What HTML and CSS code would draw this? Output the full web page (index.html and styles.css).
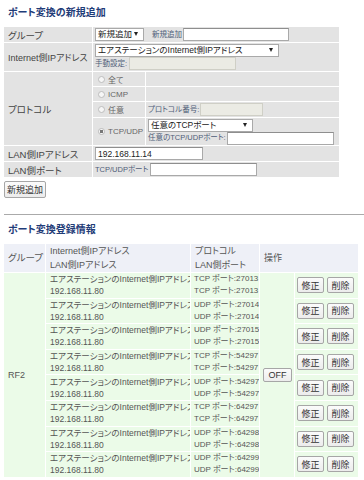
FILE: index.html
```html
<!DOCTYPE html>
<html lang="ja">
<head>
  <meta charset="UTF-8" />
  <meta name="viewport" content="width=device-width, initial-scale=1.0"/>
  <title>ポート変換</title>
  <link rel="stylesheet" href="styles.css">
</head>
<body>

  <h2 class="title">ポート変換の新規追加</h2>

  <!-- New entry form -->
  <table class="form-table">
    <colgroup>
      <col class="c-label">
      <col class="c-radio">
      <col>
    </colgroup>
    <tr class="h15">
      <th>グループ</th>
      <td colspan="2">
        <div class="line">
          <span class="sel w-group">新規追加</span>
          <span class="hint gap">新規追加</span>
          <input class="txt w-group-name" type="text">
        </div>
      </td>
    </tr>
    <tr class="h28">
      <th class="small">Internet側IPアドレス</th>
      <td colspan="2">
        <div class="line">
          <span class="sel w-wan">エアステーションのInternet側IPアドレス</span>
        </div>
        <div class="line">
          <span class="hint">手動設定:</span>
          <input class="txt off w-manual" type="text" disabled>
        </div>
      </td>
    </tr>
    <tr class="h14">
      <th rowspan="4">プロトコル</th>
      <td class="radio"><label><input type="radio" name="proto" disabled>全て</label></td>
      <td></td>
    </tr>
    <tr class="h14">
      <td class="radio"><label><input type="radio" name="proto" disabled>ICMP</label></td>
      <td></td>
    </tr>
    <tr class="h15">
      <td class="radio"><label><input type="radio" name="proto" disabled>任意</label></td>
      <td>
        <div class="line">
          <span class="hint">プロトコル番号:</span>
          <input class="txt off w-protonum" type="text" disabled>
        </div>
      </td>
    </tr>
    <tr class="h27">
      <td class="radio"><label><input type="radio" name="proto" checked>TCP/UDP</label></td>
      <td>
        <div class="line">
          <span class="sel w-port">任意のTCPポート</span>
        </div>
        <div class="line">
          <span class="hint">任意のTCP/UDPポート:</span>
          <input class="txt w-anyport" type="text">
        </div>
      </td>
    </tr>
    <tr class="h15">
      <th>LAN側IPアドレス</th>
      <td colspan="2">
        <div class="line">
          <input class="txt w-lanip" type="text" value="192.168.11.14">
        </div>
      </td>
    </tr>
    <tr class="h15">
      <th>LAN側ポート</th>
      <td colspan="2">
        <div class="line">
          <span class="hint">TCP/UDPポート</span>
          <input class="txt w-lanport" type="text">
        </div>
      </td>
    </tr>
  </table>

  <button class="btn btn-add">新規追加</button>

  <hr class="divider">

  <h2 class="title">ポート変換登録情報</h2>

  <!-- Registered entries -->
  <table class="list-table">
    <colgroup>
      <col class="c-group">
      <col class="c-wan">
      <col class="c-proto">
      <col class="c-off">
      <col class="c-ops">
    </colgroup>
    <thead>
      <tr>
        <th>グループ</th>
        <th>Internet側IPアドレス<br>LAN側IPアドレス</th>
        <th>プロトコル<br>LAN側ポート</th>
        <th colspan="2">操作</th>
      </tr>
    </thead>
    <tbody id="entries"></tbody>
  </table>

  <script>
    const entries = [
      { proto: "TCP", port: 27013 },
      { proto: "UDP", port: 27014 },
      { proto: "UDP", port: 27015 },
      { proto: "TCP", port: 54297 },
      { proto: "UDP", port: 54297 },
      { proto: "TCP", port: 64297 },
      { proto: "UDP", port: 64298 },
      { proto: "UDP", port: 64299 },
    ];

    document.getElementById("entries").innerHTML = entries.map((e, i) => `
      <tr>
        ${i === 0 ? `<td class="group" rowspan="${entries.length}">RF2</td>` : ""}
        <td class="wan">エアステーションのInternet側IPアドレス<br>192.168.11.80</td>
        <td class="proto">${e.proto} ポート:${e.port}<br>${e.proto} ポート:${e.port}</td>
        ${i === 0 ? `<td class="off" rowspan="${entries.length}"><button class="btn btn-off">OFF</button></td>` : ""}
        <td class="ops"><button class="btn btn-op">修正</button><button class="btn btn-op">削除</button></td>
      </tr>
    `).join("");
  </script>

</body>
</html>
```

FILE: styles.css
```css
body {
  font-family: "Liberation Sans", "Noto Sans CJK JP", sans-serif;
  font-feature-settings: "palt";
  color: #444;
  background: #fff;
  margin: 0;
  padding: 0 0 0 4px;
}

.title {
  margin: 0;
  padding: 6px 0 0 4px;
  font-size: 10px;
  line-height: 14px;
  font-weight: bold;
  color: #1f3c78;
}

/* New entry form */
.form-table {
  margin: 6px 0 0 -1px;
  width: 337px;
  table-layout: fixed;
  border-collapse: separate;
  border-spacing: 1px;
  background: #fff;
}

.c-label { width: 88px; }
.c-radio { width: 52px; }

.form-table th,
.form-table td {
  background: #e3e3e3;
  padding: 0 0 0 2px;
  vertical-align: middle;
  white-space: nowrap;
  overflow: hidden;
}

.form-table th {
  text-align: left;
  font-weight: normal;
  font-size: 9.5px;
  padding-left: 4px;
  color: #444;
}

.form-table th.small {
  font-size: 9px;
}

.h14 { height: 14px; }
.h15 { height: 15px; }
.h27 { height: 27px; }
.h28 { height: 28px; }

.line {
  display: flex;
  align-items: center;
  height: 13px;
}

.hint {
  font-size: 7.5px;
  line-height: 10px;
  color: #4f5d78;
  margin-right: 1px;
}

.hint.gap {
  margin-left: 8px;
}

.txt {
  box-sizing: border-box;
  height: 13px;
  border: 1px solid #a9a9a9;
  border-top-color: #8e8e8e;
  background: #fff;
  padding: 0 2px;
  margin: 0;
  font: 8.5px "Liberation Sans", "Noto Sans CJK JP", sans-serif;
  color: #222;
}

.txt.off {
  background: #ebebe4;
  border-color: #cfcfc6;
}

/* drop-down look */
.sel {
  position: relative;
  box-sizing: border-box;
  display: flex;
  align-items: center;
  height: 13px;
  padding: 0 10px 0 2px;
  border: 1px solid #a9a9a9;
  background: #fff;
  font-size: 8.5px;
  line-height: 11px;
  color: #222;
  overflow: hidden;
}

.sel::after {
  content: "";
  position: absolute;
  right: 5px;
  top: 3px;
  border-left: 2px solid transparent;
  border-right: 2px solid transparent;
  border-top: 4px solid #222;
}

.w-group { width: 49px; }
.w-group-name { width: 106px; }
.w-wan { width: 184px; }
.w-manual { width: 107px; margin-left: 1px; }
.w-protonum { width: 63px; }
.w-port { width: 105px; }
.w-anyport { width: 107px; }
.w-lanip { width: 108px; }
.w-lanport { width: 107px; margin-left: 1px; }

.radio label {
  display: flex;
  align-items: center;
  font-size: 8px;
  color: #666;
  padding-left: 3px;
}

.radio input {
  -webkit-appearance: none;
  appearance: none;
  width: 7px;
  height: 7px;
  margin: 0 3px 0 0;
  border: 1px solid #bdbdbd;
  border-radius: 50%;
  background: #f6f6f6;
  box-sizing: border-box;
}

.radio input:checked {
  background: radial-gradient(circle, #777 0 1.5px, #f6f6f6 2px);
}

.btn {
  box-sizing: border-box;
  font: 9px "Liberation Sans", "Noto Sans CJK JP", sans-serif;
  color: #333;
  background: linear-gradient(#fbfbfb, #ececec);
  border: 1px solid #a6a6a6;
  border-radius: 2px;
  padding: 0;
  margin: 0;
  cursor: pointer;
}

.btn-add {
  display: block;
  margin-top: 3px;
  width: 42px;
  height: 17px;
}

.divider {
  border: none;
  border-top: 1px solid #aaa;
  margin: 16px 0 2px 0;
}

/* Registered entries */
.list-table {
  margin: 6px 0 0 -1px;
  width: 356px;
  table-layout: fixed;
  border-collapse: separate;
  border-spacing: 1px;
  background: #fff;
}

.c-group { width: 41px; }
.c-wan { width: 144px; }
.c-proto { width: 68px; }
.c-off { width: 34px; }

.list-table th {
  height: 28px;
  background: #eef0f7;
  font-weight: normal;
  font-size: 9px;
  line-height: 14px;
  color: #555;
  text-align: left;
  padding: 0 0 0 4px;
  vertical-align: middle;
}

.list-table th:first-child {
  font-size: 9.5px;
}

.list-table td {
  height: 24.6px;
  background: #ebfbe8;
  font-size: 8.5px;
  line-height: 12px;
  color: #555;
  padding: 0 0 0 4px;
  vertical-align: middle;
  white-space: nowrap;
  overflow: hidden;
}

.list-table td.group {
  font-size: 9px;
}

.list-table td.proto {
  font-size: 8px;
  padding-left: 3px;
}

.list-table td.off {
  padding-left: 3px;
}

.list-table td.ops {
  padding-left: 2px;
}

.btn-off {
  width: 29px;
  height: 14px;
}

.btn-op {
  width: 27px;
  height: 16px;
  margin-right: 3px;
}
```
